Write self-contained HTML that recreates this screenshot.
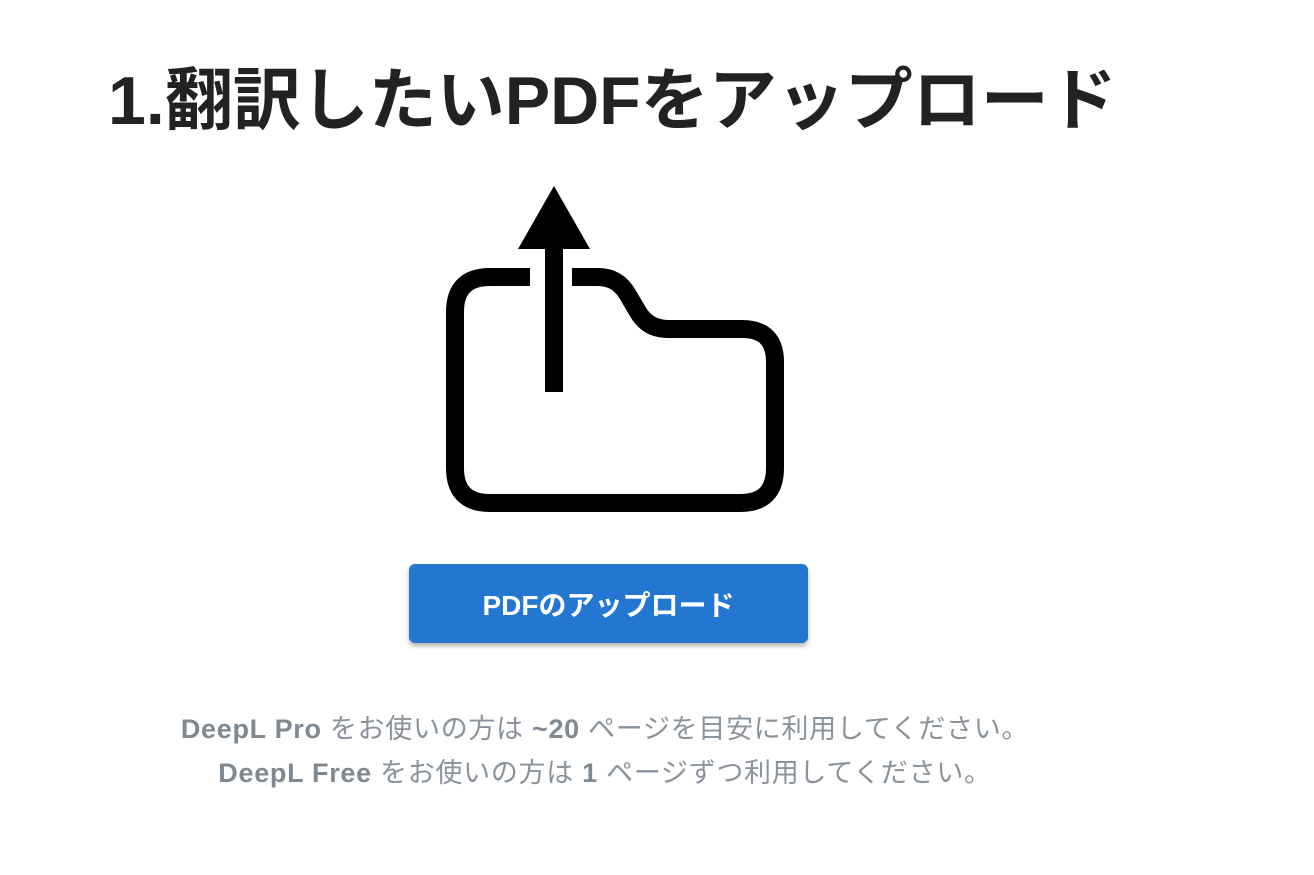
<!DOCTYPE html>
<html><head><meta charset="utf-8"><style>
html,body{margin:0;padding:0;background:#fff;width:1314px;height:875px;overflow:hidden}
body{font-family:"Liberation Sans","Noto Sans CJK JP",sans-serif;position:relative}
h1{position:absolute;left:108px;top:56px;margin:0;font-size:68px;font-weight:bold;color:#222;white-space:nowrap;line-height:90px;letter-spacing:0px}
.btn{position:absolute;left:409px;top:564px;width:399px;height:79px;background:#2477d1;border-radius:6px;box-shadow:0 3px 5px rgba(0,0,0,.3);color:#fff;font-size:28px;font-weight:bold;display:flex;align-items:center;justify-content:center}
.note{position:absolute;left:0;width:1210px;text-align:center;color:#8a939b;font-size:27px;white-space:nowrap;line-height:34px;letter-spacing:0.7px}
.note b{color:#7f8991}
</style></head><body>
<h1>1.翻訳したいPDFをアップロード</h1>
<svg style="position:absolute;left:0;top:0" width="1314" height="875">
<path d="M530 277 H490 Q455 277 455 312 V468 Q455 503 490 503 H740 Q775 503 775 468 V362 Q775 329 742 329 H668 Q648 329 638 312 L628 295 Q618 277 598 277 H572" fill="none" stroke="#000" stroke-width="18"/>
<rect x="545" y="240" width="18" height="152" fill="#000"/>
<polygon points="554,186 518,249 590,249" fill="#000"/>
</svg>
<div class="btn">PDFのアップロード</div>
<div class="note" style="top:712px"><b>DeepL Pro</b> をお使いの方は <b>~20</b> ページを目安に利用してください。</div>
<div class="note" style="top:756px"><b>DeepL Free</b> をお使いの方は <b>1</b> ページずつ利用してください。</div>
</body></html>
